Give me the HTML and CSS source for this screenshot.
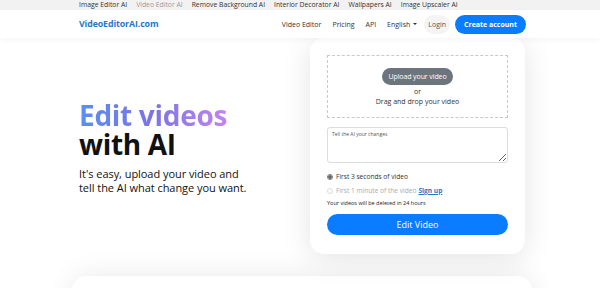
FILE: index.html
```html
<!DOCTYPE html>
<html>
<head>
<meta charset="utf-8">
<link rel="stylesheet" href="styles.css">
</head>
<body>
<div class="topbar">
  <div class="container topbar-links">
    <a>Image Editor AI</a>
    <a class="muted">Video Editor AI</a>
    <a>Remove Background AI</a>
    <a>Interior Decorator AI</a>
    <a>Wallpapers AI</a>
    <a>Image Upscaler AI</a>
  </div>
</div>
<nav class="nav">
  <div class="container nav-inner">
    <a class="logo">VideoEditorAI.com</a>
    <div class="nav-links">
      <a>Video Editor</a>
      <a>Pricing</a>
      <a>API</a>
      <a class="lang">English <span class="caret"></span></a>
      <a class="login">Login</a>
      <a class="btn-create">Create account</a>
    </div>
  </div>
</nav>
<main class="container hero">
  <div class="hero-text">
    <h1><span class="grad">Edit videos</span><br>with AI</h1>
    <p>It's easy, upload your video and<br>tell the AI what change you want.</p>
  </div>
  <div class="card">
    <div class="drop">
      <span class="btn-upload">Upload your video</span>
      <span class="or">or</span>
      <span class="dd">Drag and drop your video</span>
    </div>
    <textarea class="changes" placeholder="Tell the AI your changes"></textarea>
    <label class="radio"><span class="dot on"></span>First 3 seconds of video</label>
    <label class="radio disabled"><span class="dot"></span>First 1 minute of the video <a class="signup">Sign up</a></label>
    <div class="note">Your videos will be deleted in 24 hours</div>
    <button class="btn-edit">Edit Video</button>
  </div>
</main>
<section class="lower"></section>
</body>
</html>
```

FILE: styles.css
```css
* { box-sizing: border-box; }
html, body { margin: 0; padding: 0; }
body {
  font-family: "Open Sans", "Noto Sans", sans-serif;
  color: #212529;
  background: #fff;
  width: 600px;
  height: 288px;
  overflow: hidden;
}
a { text-decoration: none; color: inherit; }
.container { width: 446px; margin-left: 79px; }

.topbar { background: #f2f2f2; height: 10px; }
.topbar-links {
  display: flex; gap: 9px;
  font-size: 6.8px; line-height: 10px; color: #333;
}
.topbar-links .muted { color: #9a9a9a; }

.nav { background: #fff; height: 28px; box-shadow: 0 2px 6px rgba(0,0,0,0.04); position: relative; z-index: 1; }
.nav-inner { display: flex; align-items: center; justify-content: space-between; height: 28px; }
.logo { color: #1f78c8; font-weight: 700; font-size: 8.8px; letter-spacing: -0.1px; }
.nav-links { display: flex; align-items: center; font-size: 7px; color: #333; margin-right: -1px; }
.nav-links a { margin-left: 11px; }
.nav-links a:first-child { margin-left: 0; }
.lang { display: inline-flex; align-items: center; gap: 3px; }
.caret { width: 0; height: 0; border-left: 2px solid transparent; border-right: 2px solid transparent; border-top: 2.5px solid #333; }
.nav-links .login {
  color: #555; background: #f4f4f4; border-radius: 10px;
  height: 19px; padding: 0 4px; display: inline-flex; align-items: center; margin-left: 7px;
}
.nav-links .btn-create { margin-left: 5px; }
.btn-create {
  background: #0a7cff; color: #fff; font-weight: 700;
  border-radius: 10px; height: 19px; padding: 0 9px;
  display: inline-flex; align-items: center; font-size: 7px;
}

.hero { display: flex; justify-content: space-between; align-items: center; height: 216px; }
.hero-text { padding-top: 4px; }
.hero-text h1 {
  margin: 0; font-size: 28px; line-height: 29px; font-weight: 700; color: #111;
  letter-spacing: -0.3px;
}
.grad {
  background: linear-gradient(90deg, #5a8ff0 0%, #7b74e6 50%, #c384f2 100%);
  -webkit-background-clip: text; background-clip: text; color: transparent;
}
.hero-text p { margin: 8px 0 0; font-size: 11px; line-height: 14px; color: #111; letter-spacing: -0.05px; }

.card {
  width: 215px; height: 216px; background: #fff; border-radius: 14px;
  box-shadow: 0 4px 30px rgba(0,0,0,0.11);
  padding: 17px 17px 0;
  display: flex; flex-direction: column;
}
.drop {
  border: 1px dashed #c9c9c9; height: 63px;
  display: flex; flex-direction: column; align-items: center; justify-content: flex-start;
  padding-top: 12px; font-size: 7px; color: #333;
}
.btn-upload {
  background: #6c757d; color: #fff; border-radius: 9px; height: 17px; width: 71px;
  display: flex; align-items: center; justify-content: center; font-size: 7px; letter-spacing: -0.1px;
}
.or { margin-top: 2px; line-height: 10px; }
.dd { line-height: 10px; }
.changes {
  margin-top: 9px; height: 36px; width: 100%; resize: vertical;
  border: 1px solid #dcdcdc; border-radius: 3px;
  font-family: inherit; font-size: 5px; padding: 3px 4px;
}
.changes::placeholder { color: #555; }
.radio { display: flex; align-items: center; font-size: 6.6px; color: #333; margin-top: 8px; height: 11px; }
.radio.disabled { color: #aaa; margin-top: 3px; }
.dot { width: 6px; height: 6px; border-radius: 50%; border: 1px solid #bbb; margin-right: 3px; background: #fff; }
.dot.on { border-color: #777; background: radial-gradient(circle, #666 0 1.5px, #fff 2px); }
.radio.disabled .dot { border-color: #ddd; }
.signup { color: #1f78c8; font-weight: 700; text-decoration: underline; margin-left: 2px; }
.note { font-size: 5.5px; color: #222; margin-top: 3px; line-height: 9px; }
.btn-edit {
  margin-top: 6px; height: 21px; width: 100%; border: 0; border-radius: 11px;
  background: #0a7cff; color: #fff; font-family: inherit; font-size: 9px;
}

.lower {
  width: 460px; margin: 22px 0 0 72px; height: 60px; background: #fff;
  border-radius: 14px; box-shadow: 0 0 28px rgba(0,0,0,0.09);
}
```
